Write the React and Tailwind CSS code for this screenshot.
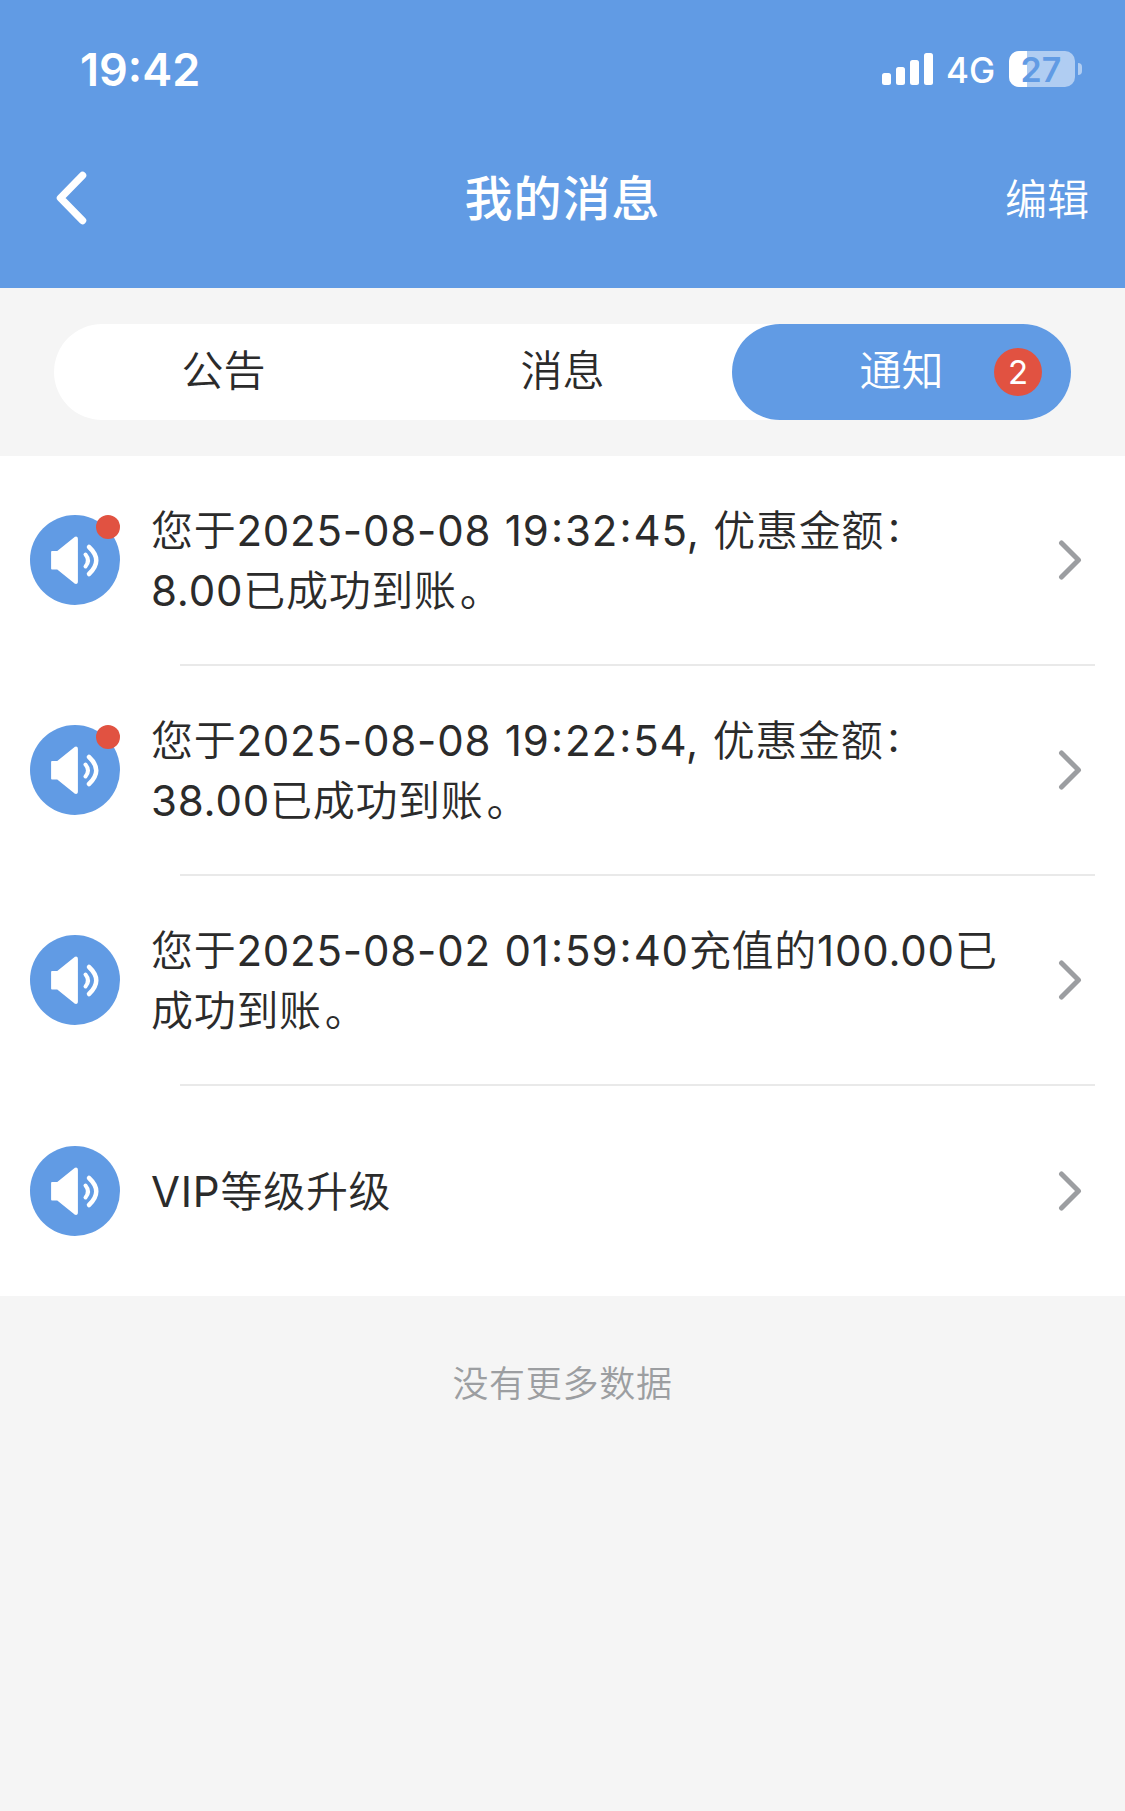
const tabs = [
  { label: '公告' },
  { label: '消息' },
  { label: '通知', count: 2, active: true },
];

const messages = [
  { lines: ['您于2025-08-08 19:32:45, 优惠金额:', '8.00已成功到账。'], unread: true },
  { lines: ['您于2025-08-08 19:22:54, 优惠金额:', '38.00已成功到账。'], unread: true },
  { lines: ['您于2025-08-02 01:59:40充值的100.00已', '成功到账。'] },
  { lines: ['VIP等级升级'] },
];

function StatusBar() {
  return (
    <div className="h-[108px] pt-[42px] pl-[80px] pr-[43px] flex items-start justify-between">
      <div className="h-[54px] leading-[56px] text-[45px] font-semibold">19:42</div>
      <div className="h-[54px] flex items-center">
        <svg width="51" height="32" viewBox="0 0 51 32" fill="currentColor">
          <rect x="0" y="20" width="9" height="12" rx="2.5" />
          <rect x="14" y="14" width="9" height="18" rx="2.5" />
          <rect x="28" y="7" width="9" height="25" rx="2.5" />
          <rect x="42" y="0" width="9" height="32" rx="2.5" />
        </svg>
        <span className="ml-[13px] mt-[2px] w-[63px] text-[35px] leading-[54px] font-medium">4G</span>
        <div className="relative w-[66px] h-[36px] rounded-[10px] bg-white/50">
          <div className="w-[18px] h-full rounded-l-[10px] bg-white" />
          <span className="absolute -inset-y-2 left-0 right-[2px] text-center text-[34px] leading-[53px] font-semibold text-[#619be4]">27</span>
        </div>
        <div className="ml-[3px] w-[4px] h-[12px] rounded-r-full bg-white/50" />
      </div>
    </div>
  );
}

function Speaker({ unread }) {
  return (
    <div className="relative w-[90px] h-[90px] shrink-0 rounded-full bg-[#619be4]">
      <svg width="90" height="90" viewBox="0 0 90 90" fill="none" stroke="#fff" strokeLinecap="round">
        <path d="M22 37h5.5L45.5 22.5Q47 22 47 24v42.5Q47 68.5 45.5 68L27.5 53.5H22Z" fill="#fff" strokeWidth="1.8" strokeLinejoin="round" />
        <path d="M55.5 39.5Q60.5 45.5 55.5 51.5" strokeWidth="4" />
        <path d="M59 32Q73.5 45.5 59 59" strokeWidth="4.5" />
      </svg>
      {unread && <span className="absolute top-0 right-0 w-6 h-6 rounded-full bg-[#e15241]" />}
    </div>
  );
}

// Latin runs are a touch heavier than the Chinese text;
// colons sit at digit mid-height and get a little extra room
function Line({ text }) {
  const parts = text.split(/([:。]|[A-Z0-9.,\- ]+)/).filter(Boolean);
  return (
    <p>
      {parts.map((part, i) => {
        if (part === ':') {
          return (
            <span key={i} className={`font-normal [font-feature-settings:'case'] ${i < parts.length - 1 ? 'px-[1.3px]' : 'pl-[4px]'}`}>:</span>
          );
        }
        if (part === '。') return <span key={i} className="pl-[3px]">。</span>;
        return <span key={i} className={/[A-Z0-9]/.test(part) ? 'font-normal tracking-[0.8px]' : ''}>{part}</span>;
      })}
    </p>
  );
}

function Message({ lines, unread, last }) {
  return (
    <li className={`relative h-[210px] pl-[30px] pr-[43px] flex items-center ${last ? '' : 'pb-[2px]'}`}>
      <Speaker unread={unread} />
      <div className="ml-[31px] mt-[2px] flex-1 text-[42px] leading-[60px] tracking-[0.7px] [word-spacing:1px] font-[350] whitespace-nowrap">
        {lines.map((line) => <Line key={line} text={line} />)}
      </div>
      <svg width="24" height="40" viewBox="0 0 24 40" fill="none" stroke="#9c9ea1" strokeWidth="5" strokeLinecap="round" strokeLinejoin="round">
        <path d="M3.5 3L20.5 20L3.5 37" />
      </svg>
      {!last && <span className="absolute left-[180px] right-[30px] bottom-0 h-[2px] bg-[#e9e9e9]" />}
    </li>
  );
}

export default function App() {
  return (
    <div className="min-h-[1811px] bg-[#f5f5f5] text-[#2b2b2b] font-['Inter','Noto_Sans_CJK_SC',sans-serif]" lang="zh-CN">
      <header className="h-[288px] bg-[#619be4] text-white">
        <StatusBar />
        <div className="h-[180px] px-[36px] grid grid-cols-[1fr_auto_1fr] items-center">
          <svg className="ml-5" width="32" height="54" viewBox="0 0 32 54" fill="none" stroke="currentColor" strokeWidth="7.5" strokeLinecap="round" strokeLinejoin="round">
            <path d="M26.5 4.5L4.5 27L26.5 49.5" />
          </svg>
          <h1 className="pt-[2px] text-[48px] font-medium tracking-[1px]">我的消息</h1>
          <button className="justify-self-end pt-[2px] text-[42px] font-[350]">编辑</button>
        </div>
      </header>

      <nav className="h-[168px] px-[54px] py-9">
        <div className="h-[96px] grid grid-cols-3 rounded-full bg-white">
          {tabs.map(({ label, count, active }) => (
            <button key={label}
              className={`relative rounded-full text-[42px] font-[350] pb-1 ${active ? 'bg-[#619be4] text-white' : ''}`}
            >
              {label}
              {count && (
                <span className="absolute right-[29px] top-6 w-12 h-12 rounded-full bg-[#e15241] text-[33px] leading-[48px] font-normal">
                  {count}
                </span>
              )}
            </button>
          ))}
        </div>
      </nav>

      <ul className="bg-white">
        {messages.map((m, i) => (
          <Message key={i} {...m} last={i === messages.length - 1} />
        ))}
      </ul>

      <p className="pt-[61px] text-center text-[36px] leading-[54px] tracking-[0.7px] font-[350] text-[#9c9ea1]">没有更多数据</p>
    </div>
  );
}
